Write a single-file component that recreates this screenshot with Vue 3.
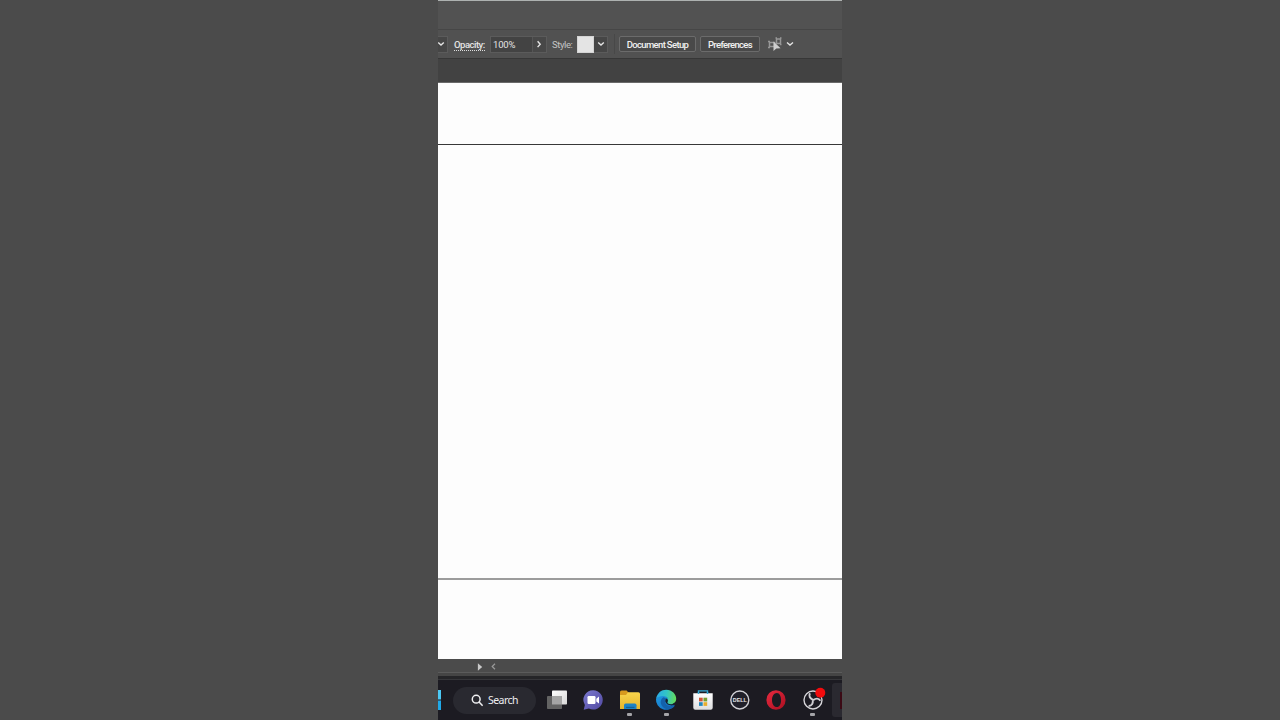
<template>
  <div class="stage">
    <main class="screen">
      <header class="app-bar"></header>

      <section class="control-bar">
        <button class="drop drop-cut" aria-label="Stroke options">
          <svg width="8" height="6" viewBox="0 0 8 6"><path d="M.2 1.500 3 4.100 5.800 1.500" /></svg>
        </button>
        <span class="label label-opacity">Opacity:</span>
        <div class="field">
          <span class="value">100%</span>
          <button class="step" aria-label="Opacity slider">
            <svg width="6" height="8" viewBox="0 0 6 8"><path d="M1.600 1.300 4.200 4.200 1.600 7.100" /></svg>
          </button>
        </div>
        <span class="label label-style">Style:</span>
        <div class="swatch-field">
          <span class="swatch"></span>
          <button class="drop" aria-label="Graphic styles">
            <svg width="8" height="6" viewBox="0 0 8 6"><path d="M1.200 1.500 4 4.100 6.800 1.500" /></svg>
          </button>
        </div>
        <span class="divider"></span>
        <button class="action action-setup"><span>Document Setup</span></button>
        <button class="action action-prefs"><span>Preferences</span></button>
        <svg class="select-similar" width="15" height="15" viewBox="0 0 15 15">
          <path class="frame" d="M1.500 5.500h5v4h-5zM8.500 2h4v4.500h-4zM0 4.500h2M0 10.500h2M7.500 1h1.500M12 1h1.500M12 7.500h1.500" />
          <path class="cursor" d="M5.500 4.500v9.500l2.800-2.500 4.300-.2z" />
        </svg>
        <svg class="more" width="8" height="6" viewBox="0 0 8 6"><path d="M1 1.500 4 4 7 1.500" /></svg>
      </section>

      <div class="tab-bar"></div>

      <section class="canvas">
        <div class="artboard"></div>
      </section>

      <div class="status-bar">
        <svg width="6" height="8" viewBox="0 0 6 8"><path class="play" d="M.9.3 5.200 4 .9 7.700z" /></svg>
        <svg class="scroll-left" width="5" height="8" viewBox="0 0 5 8"><path d="M4 .8 1.200 3.500 4 6.200" /></svg>
      </div>
      <div class="window-edge"></div>

      <footer class="taskbar">
        <svg class="start" width="3" height="20" viewBox="0 0 3 20">
          <path fill="#4cc9f5" d="M0 0h3v9.500H0z" />
          <path fill="#20a9e8" d="M0 10.500h3V20H0z" />
        </svg>
        <div class="search">
          <svg width="13" height="13" viewBox="0 0 13 13">
            <circle cx="5.200" cy="5.200" r="3.900" />
            <path d="m8.100 8.100 3.500 3.700" />
          </svg>
          <span>Search</span>
        </div>
        <nav class="apps">
          <div v-for="app in apps" :key="app.id" class="app">
            <svg v-if="app.id === 'tasks'" width="24" height="24" viewBox="0 0 24 24">
              <defs>
                <linearGradient id="task-front" x2="1" y2="1">
                  <stop stop-color="#fff" /><stop offset="1" stop-color="#d8d8d8" />
                </linearGradient>
              </defs>
              <rect x="7" y="2.500" width="15" height="14" rx=".8" fill="url(#task-front)" />
              <rect x="2" y="8" width="15" height="13" rx=".8" fill="#636363" />
              <path d="M7 8h10v8.500H7z" fill="#a5a5a5" />
            </svg>

            <svg v-else-if="app.id === 'chat'" width="24" height="24" viewBox="0 0 24 24">
              <defs>
                <linearGradient id="chat-bubble" x2="1" y2="1">
                  <stop stop-color="#7b79cf" /><stop offset="1" stop-color="#5149a2" />
                </linearGradient>
              </defs>
              <path d="M12.300 2.200a9.600 9.700 0 1 1-4.400 18.400L2.700 21.800l1.200-4.800A9.600 9.700 0 0 1 12.300 2.200z" fill="url(#chat-bubble)" />
              <rect x="6.500" y="8" width="8" height="8" rx="1.200" fill="#fff" />
              <path d="m15.300 10.800 2.700-2.200v7l-2.700-2.200z" fill="#fff" />
            </svg>

            <svg v-else-if="app.id === 'files'" width="24" height="24" viewBox="0 0 24 24">
              <defs>
                <linearGradient id="folder-face" x2="0" y2="1">
                  <stop stop-color="#f8d44c" /><stop offset="1" stop-color="#e5b52d" />
                </linearGradient>
              </defs>
              <path d="M2 4.200q0-1.700 1.600-1.700h5l2.200 2.600v4H2z" fill="#d79a1e" />
              <path d="M10 4.200h10.400q1.600 0 1.600 1.600v15.200H2V7h6z" fill="url(#folder-face)" />
              <path d="M6 21v-3.800q0-1.700 1.700-1.700h9.100q1.700 0 1.700 1.700V21z" fill="#1c82c6" />
              <path d="M8 18.800h8.500v1.200H8z" fill="#136094" />
            </svg>

            <svg v-else-if="app.id === 'edge'" width="24" height="24" viewBox="0 0 24 24">
              <defs>
                <linearGradient id="edge-top" x1="0" y1=".4" x2="1" y2=".5">
                  <stop stop-color="#2aa9e8" /><stop offset=".5" stop-color="#32c5c5" /><stop offset="1" stop-color="#65dc58" />
                </linearGradient>
                <linearGradient id="edge-body" x2=".8" y2="1">
                  <stop stop-color="#209be2" /><stop offset="1" stop-color="#126fc2" />
                </linearGradient>
              </defs>
              <path d="M2 11a10 10 0 0 0 18.500 6l-5-5L12 8 5 7z" fill="url(#edge-body)" />
              <path d="M2 11C3.200 5 7.300 1.800 12.200 1.800c6 0 10 4.500 10 9 0 3.500-2.700 5.400-5.400 5.400-2.500 0-4-.8-3.300-2.100 1.800-3.200-.8-6-4.500-6-3 0-5.600 1.100-7 2.900z" fill="url(#edge-top)" />
              <path d="M9.500 9.200c-2.800 1.800-3.500 5-1.900 8 1.900 3.600 6.800 5.300 10.500 3.100 1.300-.8 2.300-1.900 3-3.100-3.800 1.800-8.300.9-9.600-1.800-.9-1.800-.4-3.600.6-5z" fill="#1461ab" />
              <path d="M12.100 10.400c1.900.6 2.300 2.100 1.400 3.700-.7 1.300.8 2.100 3.300 2.100 1.700 0 3.200-.7 4.200-1.800l-.6 2.600c-4 1.200-8-.3-8.900-2.900-.4-1.200-.1-2.600.6-3.700z" fill="#17202b" />
            </svg>

            <svg v-else-if="app.id === 'store'" width="24" height="24" viewBox="0 0 24 24">
              <defs>
                <linearGradient id="store-bag" x2="0" y2="1">
                  <stop stop-color="#fff" /><stop offset="1" stop-color="#dededf" />
                </linearGradient>
              </defs>
              <path d="M7.500 6V2.900h9V6" fill="none" stroke="#35a9d3" stroke-width="1.400" />
              <path d="M2.300 5.200h19.400v14.500q0 2-2 2H4.300q-2 0-2-2z" fill="url(#store-bag)" />
              <path d="M7.500 6V4M16.500 6V4" stroke="#35a9d3" stroke-width="1.400" />
              <path d="M8 9.700h3.700v3.700H8z" fill="#cf5537" />
              <path d="M12.500 9.700h3.700v3.700h-3.700z" fill="#759f31" />
              <path d="M8 14.200h3.700v3.700H8z" fill="#2387bd" />
              <path d="M12.500 14.200h3.700v3.700h-3.700z" fill="#e9ae2c" />
            </svg>

            <svg v-else-if="app.id === 'dell'" width="24" height="24" viewBox="0 0 24 24">
              <circle cx="11.800" cy="12" r="9" fill="#20202a" stroke="#d0d0d5" stroke-width="1.400" />
              <text class="dell" x="11.800" y="14.200" text-anchor="middle" textLength="14" lengthAdjust="spacingAndGlyphs">DELL</text>
            </svg>

            <svg v-else-if="app.id === 'opera'" width="24" height="24" viewBox="0 0 24 24">
              <defs>
                <linearGradient id="opera-ring" x2="1" y2="1">
                  <stop stop-color="#e92b40" /><stop offset="1" stop-color="#a90e20" />
                </linearGradient>
              </defs>
              <path fill="url(#opera-ring)" fill-rule="evenodd" d="M12 2.200a9.600 9.800 0 1 0 0 19.600 9.600 9.800 0 0 0 0-19.600zm.9 2.700c2.600 0 4.200 3.200 4.200 7.100s-1.600 7.100-4.200 7.100c-3 0-4.900-3.200-4.900-7.100S9.900 4.900 12.900 4.900z" />
            </svg>

            <svg v-else width="24" height="24" viewBox="0 0 24 24">
              <circle cx="12" cy="12" r="9" fill="#1c1b23" stroke="#d6d5d9" stroke-width="1.400" />
              <g fill="none" stroke="#cfced3" stroke-width="1.900">
                <path d="M9 5.200c-1.500 2.900-.2 5.100 3 6.600" />
                <path d="M9 5.200c-1.500 2.900-.2 5.100 3 6.600" transform="rotate(120 12 12)" />
                <path d="M9 5.200c-1.500 2.900-.2 5.100 3 6.600" transform="rotate(240 12 12)" />
              </g>
              <circle cx="19.300" cy="4.700" r="5" fill="#f20b0d" />
            </svg>
            <span v-if="app.running" class="running"></span>
          </div>
        </nav>
        <div class="active-app"><span></span></div>
      </footer>
    </main>
  </div>
</template>

<script setup>
const apps = [
  { id: 'tasks' },
  { id: 'chat' },
  { id: 'files', running: true },
  { id: 'edge', running: true },
  { id: 'store' },
  { id: 'dell' },
  { id: 'opera' },
  { id: 'obs', running: true }
]
</script>

<style>
body {
  margin: 0;
  background: #4b4b4b;
}
</style>

<style scoped>
.stage {
  display: flex;
  justify-content: center;
  width: 1280px;
  height: 720px;
  overflow: hidden;
  background: #4b4b4b;
  font-family: Roboto, "Noto Sans", sans-serif;
}
.screen {
  display: flex;
  flex-direction: column;
  width: 404px;
  height: 720px;
  overflow: hidden;
}
.screen * {
  box-sizing: border-box;
}
button {
  padding: 0;
  margin: 0;
  font: inherit;
  color: inherit;
}
svg {
  display: block;
  flex: none;
}
.app-bar {
  flex: 0 0 29px;
  border-top: 1px solid #adb1b0;
  background: #525252;
}
.control-bar {
  display: flex;
  align-items: center;
  flex: 0 0 30px;
  border-top: 1px solid #464646;
  border-bottom: 1px solid #373737;
  background: #515151;
  color: #e4e4e4;
  font-size: 9.5px;
  line-height: 14px;
  white-space: nowrap;
}
.control-bar path {
  fill: none;
  stroke: #e4e4e4;
  stroke-width: 1.4;
}
.drop {
  display: flex;
  align-items: center;
  justify-content: center;
  width: 14px;
  height: 17px;
  border: 1px solid #5b5b5b;
  border-left: 0;
  background: #464646;
}
.drop-cut {
  width: 10px;
  justify-content: flex-start;
  margin-right: 6px;
}
.label-opacity {
  width: 31px;
  height: 12px;
  margin: 1px 5px 0 0;
  border-bottom: 1px dotted #ddd;
  font-weight: 500;
  line-height: 11px;
  letter-spacing: -0.5px;
}
.field {
  display: flex;
  width: 57px;
  height: 17px;
  margin-right: 5px;
  border: 1px solid #5b5b5b;
  background: #434343;
}
.value {
  width: 41px;
  padding-left: 2px;
  line-height: 16px;
  letter-spacing: -0.2px;
}
.step {
  display: flex;
  align-items: center;
  justify-content: flex-start;
  flex: 1;
  padding-left: 3px;
  border: 0;
  border-left: 1px solid #555;
  background: #484848;
}
.label-style {
  width: 21px;
  margin: 1px 4px 0 0;
  color: #c4c4c4;
  letter-spacing: -0.4px;
}
.swatch-field {
  display: flex;
  height: 17px;
}
.swatch {
  width: 17px;
  border: 1px solid #d4d4d4;
  background: #e4e4e4;
}
.divider {
  width: 1px;
  height: 20px;
  margin: 0 4px 0 6px;
  background: #484848;
}
.action {
  width: 77px;
  height: 16px;
  border: 1px solid #6b6b6b;
  border-radius: 2px;
  background: #494949;
  color: #f0f0f0;
  font-weight: 500;
  line-height: 15px;
  letter-spacing: -0.66px;
  white-space: nowrap;
}
.action span {
  display: block;
}
.action-prefs {
  width: 60px;
  margin-left: 4px;
}
.select-similar {
  margin-left: 8px;
}
.control-bar .frame {
  stroke: #979797;
  stroke-width: 1.5;
}
.control-bar .cursor {
  fill: #cecece;
  stroke: none;
}
.more {
  margin-left: 3px;
}
.tab-bar {
  flex: 0 0 24px;
  border-bottom: 1px solid #6a6a6a;
  background: #424242;
}
.canvas {
  flex: 0 0 576px;
  padding: 61px 0 79px;
  background: #fdfdfd;
}
.artboard {
  height: 436px;
  border-top: 1px solid #383838;
  border-bottom: 2px solid #9c9c9c;
}
.status-bar {
  display: flex;
  align-items: center;
  flex: 0 0 14px;
  padding: 2px 0 0 39px;
  border-bottom: 1px solid #5b5b5b;
  background: #4b4b4b;
}
.play {
  fill: #c9c9c9;
}
.scroll-left {
  margin-left: 8px;
}
.scroll-left path {
  fill: none;
  stroke: #999;
  stroke-width: 1.2;
}
.window-edge {
  flex: 0 0 7px;
  border-top: 3px solid #454545;
  border-bottom: 1px solid #36363a;
  background: #252528;
}
.taskbar {
  display: flex;
  align-items: center;
  flex: 0 0 40px;
  background: #1c1b22;
}
.search {
  display: flex;
  align-items: center;
  width: 83px;
  height: 27px;
  margin-left: 12px;
  padding-left: 18px;
  border-radius: 14px;
  background: #292930;
  color: #ededf0;
  font-family: "Noto Sans", "Open Sans", sans-serif;
  font-size: 10.5px;
  line-height: 14px;
  letter-spacing: -0.55px;
}
.search svg {
  fill: none;
  stroke: #f0f0f2;
  stroke-width: 1.5;
}
.search span {
  margin: 0 0 1px 4px;
}
.apps {
  display: flex;
  width: 292.5px;
  margin-left: 2.5px;
}
.app {
  position: relative;
  display: flex;
  align-items: center;
  justify-content: center;
  flex: 1;
  height: 38px;
}
.app svg {
  overflow: visible;
}
.running {
  position: absolute;
  bottom: 3px;
  width: 5px;
  height: 3px;
  border-radius: 1px;
  background: #a4a4a8;
}
.dell {
  fill: #e5e5e8;
  font: bold 6.2px "Liberation Sans", sans-serif;
}
.active-app {
  display: flex;
  align-items: center;
  justify-content: flex-end;
  flex: 1;
  height: 34px;
  margin-left: 1px;
  border-radius: 3px 0 0 3px;
  background: #2a2930;
}
.active-app span {
  width: 2px;
  height: 17px;
  background: #3b0a15;
}
</style>
